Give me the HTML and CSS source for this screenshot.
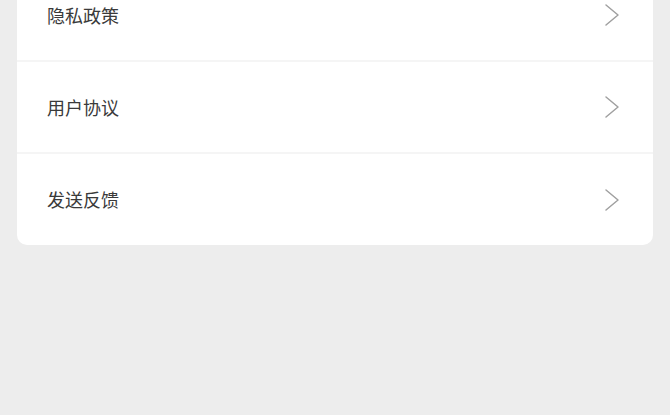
FILE: index.html
```html
<!DOCTYPE html>
<html lang="zh">
<head>
  <meta charset="UTF-8">
  <title>设置</title>
  <meta name="viewport" content="width=device-width, initial-scale=1.0">
  <link rel="stylesheet" href="styles.css">
</head>
<body>
  <div class="page">
    <div class="card">
      <div class="row">
        <span class="label">隐私政策</span>
        <svg class="arrow" viewBox="0 0 16 24"><path d="M2 2 L14 12 L2 22" /></svg>
      </div>
      <div class="row">
        <span class="label">用户协议</span>
        <svg class="arrow" viewBox="0 0 16 24"><path d="M2 2 L14 12 L2 22" /></svg>
      </div>
      <div class="row">
        <span class="label">发送反馈</span>
        <svg class="arrow" viewBox="0 0 16 24"><path d="M2 2 L14 12 L2 22" /></svg>
      </div>
    </div>
  </div>
</body>
</html>
```

FILE: styles.css
```css
html, body { margin: 0; padding: 0; }
body {
  background: #ededed; min-height: 100vh;
  font-family: "Noto Sans CJK SC", "Noto Sans", sans-serif;
}
.page { padding: 0 17px; }
.card {
  background: #fff; border-radius: 10px;
  margin-top: -30px; overflow: hidden;
}
.row {
  height: 90px; display: flex; align-items: center; justify-content: space-between;
  padding: 0 33px 0 30px; border-bottom: 2px solid #f5f5f5;
}
.row:last-child { border-bottom: none; height: 91px; }
.label { font-size: 18px; color: #3a3a3a; margin-top: -1px; }
.arrow { width: 16px; height: 24px; }
.arrow path { fill: none; stroke: #a0a0a0; stroke-width: 1.5; stroke-linecap: round; stroke-linejoin: round; }
```
